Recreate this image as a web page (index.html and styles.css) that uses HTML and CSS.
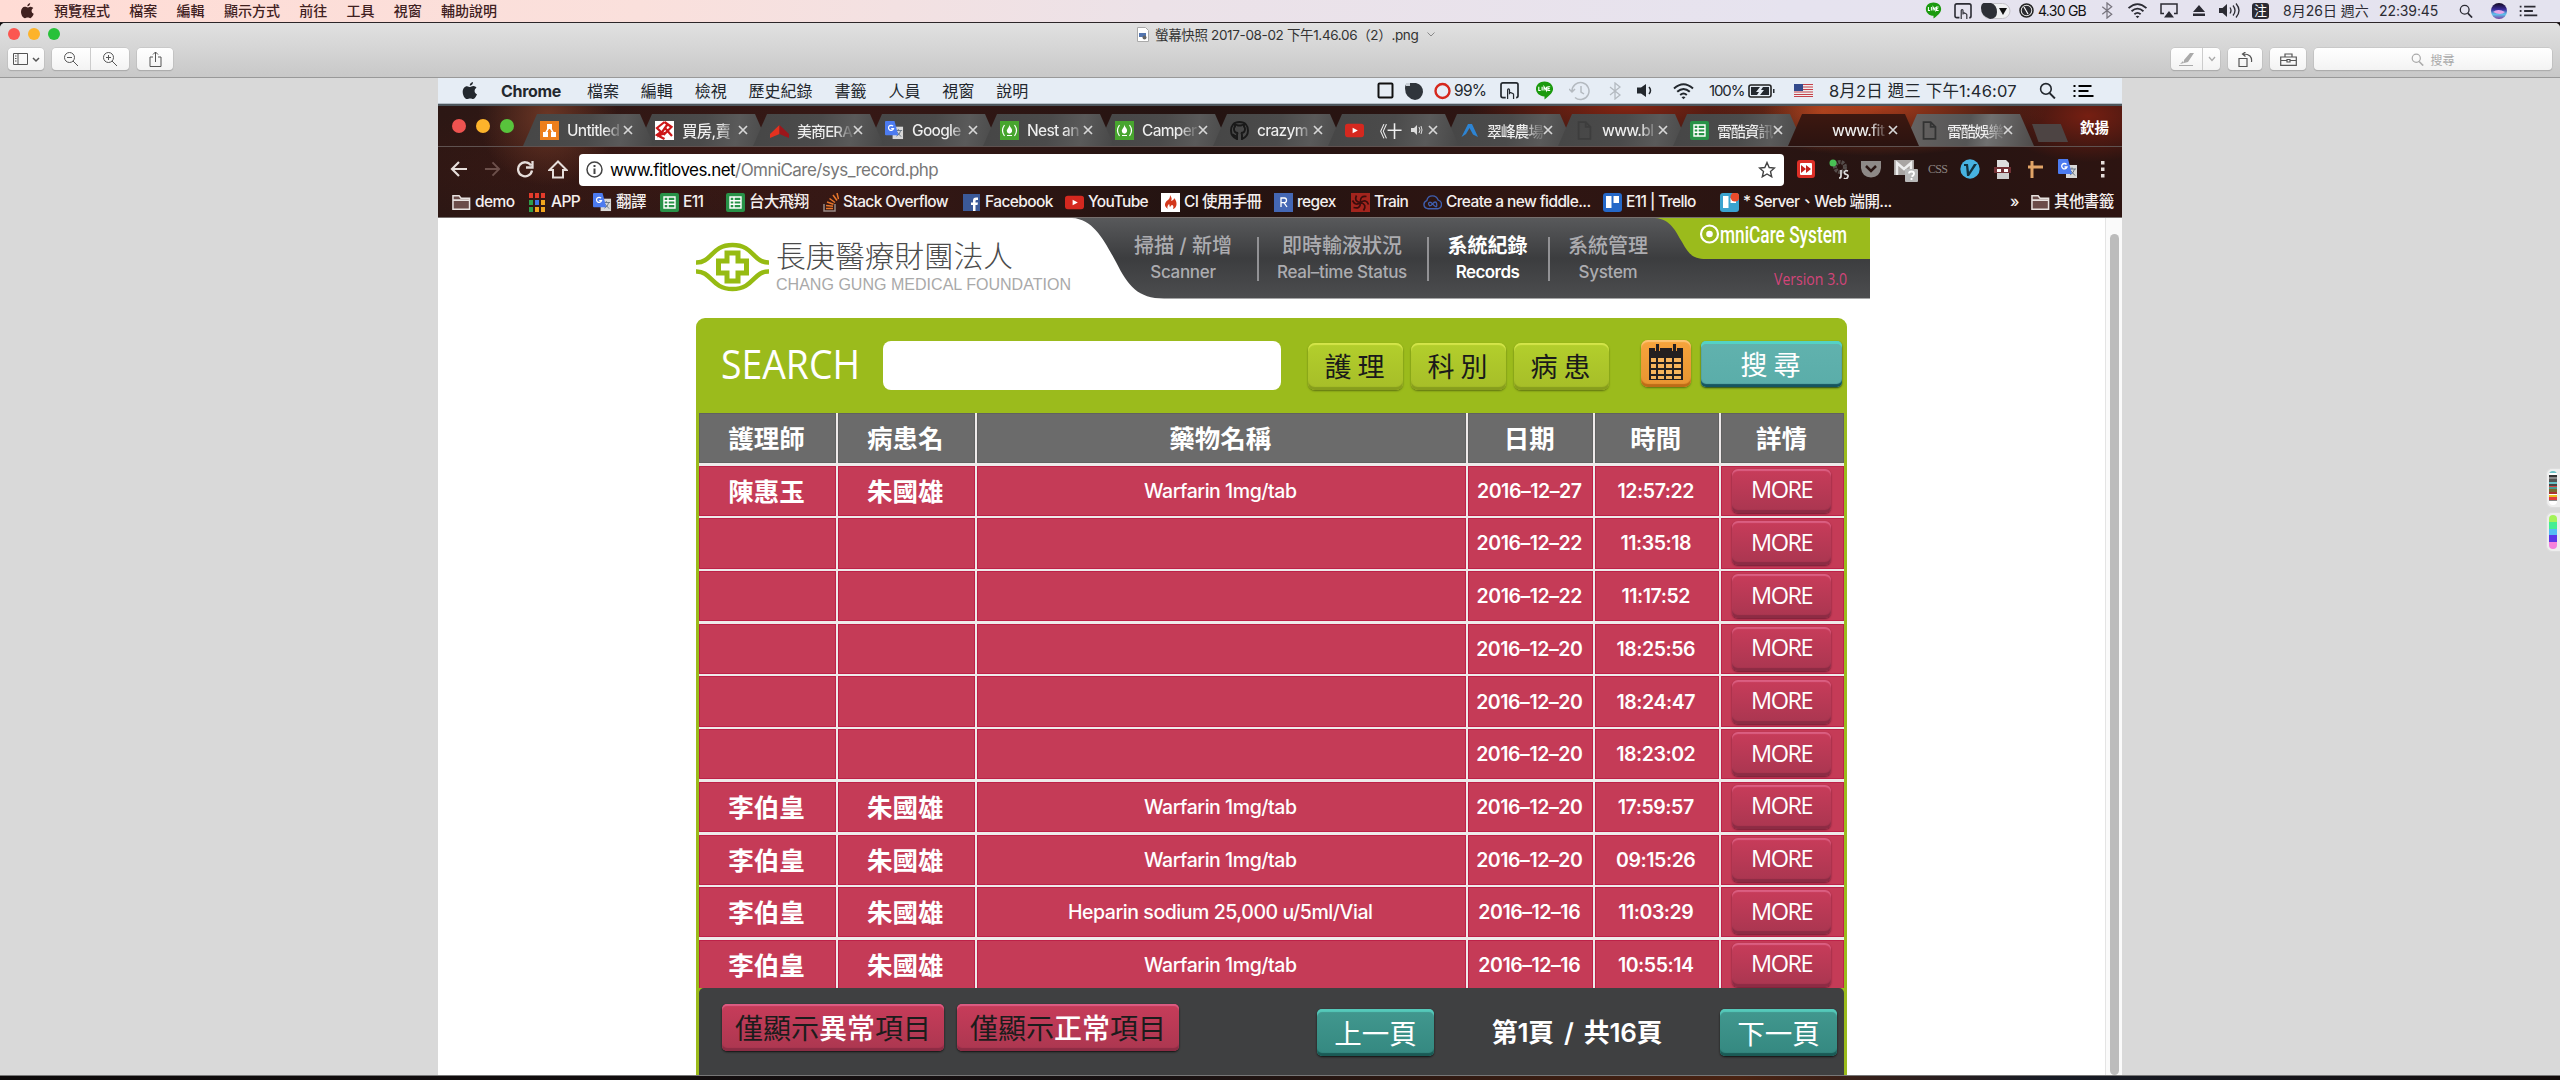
FILE: index.html
```html
<!DOCTYPE html>
<html lang="zh-Hant">
<head>
<meta charset="utf-8">
<title>螢幕快照 2017-08-02 下午1.46.06（2）.png</title>
<link rel="stylesheet" href="styles.css">
</head>
<body>
<svg class="defs" aria-hidden="true">
  <symbol id="apple" viewBox="0 0 16 18"><path d="M11 0c.2 1.6-1.200 3.600-3.200 3.700C7.500 2 9.200.300 11 0zM8.200 5c.7 0 1.800-1 3.300-.900 1.200.1 2.300.6 3 1.600-2.800 1.800-2.300 5.400.5 6.500-.7 1.900-2.200 4.800-3.800 4.900-1.100 0-1.600-.7-3-.7s-1.900.7-3 .7C3 17.200.700 13.500.700 9.900c0-3.400 2-5.700 4.300-5.700 1.300 0 2.300.8 3.200.8z"/></symbol>
  <symbol id="glass" viewBox="0 0 16 16"><circle cx="6.500" cy="6.500" r="5" fill="none" stroke="currentColor" stroke-width="1.500"/><path d="M10 10.500l5 5" stroke="currentColor" stroke-width="1.900"/></symbol>
  <symbol id="list" viewBox="0 0 20 16"><path d="M0 3h2M5 3h13M0 8h2M5 8h10M0 13h2M5 13h15" stroke="currentColor" stroke-width="2.200"/></symbol>
  <symbol id="wifi" viewBox="0 0 22 18"><path d="M1.500 6.500q9.500-8.500 19 0M4.700 9.800q6.300-5.600 12.600 0M7.700 12.900q3.300-2.800 6.600 0" fill="none" stroke="currentColor" stroke-width="2"/><path d="M9 15.200q2-1.500 4 0l-2 2z"/></symbol>
  <symbol id="line" viewBox="0 0 19 20"><path d="M9.500.500c5 0 9 3.300 9 7.700 0 5-5.500 8.300-9 11.300v-3.200C4.500 16.300.500 12.600.500 8.200S4.500.500 9.500.500z" fill="#1b9a0e"/><path d="M3.500 6v4h2M7 6v4M9 10V6l2.500 4V6M15.500 6H13v4h2.500M13 8h2" fill="none" stroke="#fff" stroke-width="1.200"/></symbol>
  <symbol id="hand" viewBox="0 0 20 18"><path d="M6 16.500H3q-2 0-2-2V3q0-2 2-2h14q2 0 2 2v11.500q0 2-2 2" fill="none" stroke="currentColor" stroke-width="1.800"/><path d="M8 18V8.500q0-1.200 1-1.200t1 1.200V13M10 11.500q1.500-.8 2.500.3 1.500 0 1.800 1.200V18" fill="none" stroke="currentColor" stroke-width="1.300"/></symbol>
  <symbol id="bt" viewBox="0 0 12 18"><path d="M1 5l10 8-5 4V1l5 4-10 8" fill="none" stroke="currentColor" stroke-width="1.300"/></symbol>
  <symbol id="sheet" viewBox="0 0 19 19"><rect width="19" height="19" rx="2" fill="#279247"/><path d="M4 4h11v11H4zM4 7.700h11M4 11.300h11M8 4v11" fill="none" stroke="#fff" stroke-width="1.400"/></symbol>
  <symbol id="trans" viewBox="0 0 20 20"><rect x="8" y="6" width="11" height="13" fill="#d8d8d8"/><path d="M11 10h7M14 8.500V10M12 16q4-2 4.500-6M12.500 11.500l4.500 5" stroke="#697785" fill="none"/><path d="M1 0h9l4 15H1q-1 0-1-1V1q0-1 1-1z" fill="#4c7bf0"/><path d="M8.500 5.500A2.700 2.700 0 1 0 9 8H6.500" fill="none" stroke="#fff" stroke-width="1.300"/></symbol>
  <symbol id="yt" viewBox="0 0 20 19"><rect y="2.500" width="20" height="14" rx="3" fill="#d5281f"/><path d="M8 6.500l5.500 3-5.500 3z" fill="#fff"/></symbol>
  <symbol id="fcc" viewBox="0 0 19 19"><rect width="19" height="19" fill="#47a52e"/><path d="M4.500 4q-4 5.500 0 11M14.500 4q4 5.500 0 11M7 14.500h5" fill="none" stroke="#fff" stroke-width="1.200"/><path d="M9.300 3.500c.5 3 3.400 4 2.700 7q-.6 2-2.500 2.300Q7 12.500 6.800 10C6.700 8 9.300 7 9.300 3.500z" fill="#fff"/></symbol>
  <symbol id="folder" viewBox="0 0 20 17"><path d="M1 15.500V1.500h6.500l2 2.500H18.500v11.500zM1 6h17.500" fill="#6b4c49" stroke="#e8e2e0" stroke-width="1.600"/></symbol>
  <symbol id="doc" viewBox="0 0 12 16"><path d="M1 1h6l4 4v10H1zM7 1v4h4" fill="none" stroke="currentColor" stroke-width="1.500"/></symbol>
  <symbol id="x" viewBox="0 0 10 10"><path d="M1 1l8 8M9 1l-8 8" stroke="#d6d6d6" stroke-width="1.700"/></symbol>
</svg>

<header class="menubar">
  <svg class="m-apple"><use href="#apple"/></svg>
  <nav class="menus"><span>預覽程式</span><span>檔案</span><span>編輯</span><span>顯示方式</span><span>前往</span><span>工具</span><span>視窗</span><span>輔助說明</span></nav>
  <div class="extras">
    <svg width="17" height="17"><use href="#line"/></svg>
    <svg width="18" height="16"><use href="#hand"/></svg>
    <svg width="30" height="16" viewBox="0 0 30 16"><rect x="1" y=".5" width="28" height="15" rx="7.500" fill="#f0f0f2" stroke="#c4c2c8"/><path d="M2.500 0H10Q16 2 16 9T9 16Q0 13 0 5 0 1 2.500 0z" fill="#2d2f36"/><path d="M18 5h8l-4 7z" fill="#111"/></svg>
    <svg width="15" height="15" viewBox="0 0 15 15"><circle cx="7.500" cy="7.500" r="6.500" fill="#eee" stroke="#222" stroke-width="1.500"/><circle cx="7.500" cy="7.500" r="4.800" fill="#2b2b30"/><path d="M5 4l4 7" stroke="#fff" stroke-width="1.200"/></svg>
    <span class="gb">4.30 GB</span>
    <svg class="faint" width="12" height="17"><use href="#bt"/></svg>
    <svg width="21" height="17"><use href="#wifi"/></svg>
    <svg width="18" height="15" viewBox="0 0 18 15"><path d="M4 10.500H1V1h16v9.500h-3" fill="none" stroke="#2b2b33" stroke-width="1.500"/><path d="M9 8l5 6.500H4z"/></svg>
    <svg width="12" height="11" viewBox="0 0 12 11"><path d="M6 0l6 7H0zM0 8.500h12V11H0z"/></svg>
    <svg width="21" height="15" viewBox="0 0 21 15"><path d="M0 5h3.500L8 1v13L3.500 10H0z"/><path d="M11 4.500q2 3 0 6M14 2.500q4 5 0 10M17 .5q6 7 0 14" fill="none" stroke="currentColor" stroke-width="1.300"/></svg>
    <span class="ime">注</span>
    <span>8月26日 週六</span>
    <span class="clk">22:39:45</span>
    <svg width="14" height="14"><use href="#glass"/></svg>
    <svg width="16" height="16" viewBox="0 0 16 16"><defs><linearGradient id="siri" x2="0" y2="1"><stop stop-color="#12091f"/><stop offset=".4" stop-color="#3a2b9a"/><stop offset=".7" stop-color="#5fc6ef"/><stop offset="1" stop-color="#7a3c9c"/></linearGradient></defs><circle cx="8" cy="8" r="8" fill="url(#siri)"/><path d="M2 9q5-4 12 0-4 4-12 0z" fill="#e7a7e8"/></svg>
    <svg width="19" height="14"><use href="#list"/></svg>
  </div>
</header>

<main class="window">
  <div class="titlebar">
    <div class="title-row">
      <div class="lights"><i class="red"></i><i class="yellow"></i><i class="green"></i></div>
      <div class="title">
        <svg width="12" height="15" viewBox="0 0 12 15"><path d="M.5.500h8l3 3v11H.500z" fill="#fff" stroke="#aaa"/><rect x="2" y="6" width="7" height="4" fill="#5476b0"/><circle cx="7.500" cy="10.500" r="2" fill="#666"/></svg>
        <span>螢幕快照 2017-08-02 下午1.46.06（2）.png</span>
        <svg width="8" height="5" viewBox="0 0 8 5"><path d="M.5.500L4 4 7.500.500" fill="none" stroke="#888"/></svg>
      </div>
    </div>
    <div class="tools">
      <div class="btn b-side"><svg width="27" height="14" viewBox="0 0 27 14"><path d="M.5 1.500h14v11H.500zM5 1.500v11M2 4h1.500M2 6.500h1.500M2 9h1.500" fill="none" stroke="#555"/><path d="M20 6l3 3 3-3" fill="none" stroke="#555" stroke-width="1.500"/></svg></div>
      <div class="btn b-zoom">
        <span><svg width="16" height="16" viewBox="0 0 16 16"><circle cx="6.500" cy="6.500" r="5" fill="none" stroke="#555"/><path d="M4 6.500h5M10 10l5 5" stroke="#555"/></svg></span>
        <span><svg width="16" height="16" viewBox="0 0 16 16"><circle cx="6.500" cy="6.500" r="5" fill="none" stroke="#555"/><path d="M4 6.500h5M6.500 4v5M10 10l5 5" stroke="#555"/></svg></span>
      </div>
      <div class="btn b-share"><svg width="13" height="16" viewBox="0 0 13 16"><path d="M4 6H1v9.500h11V6H9M6.500 11V1M4 3.500L6.500 1 9 3.500" fill="none" stroke="#555"/></svg></div>
      <div class="btn b-pen">
        <span><svg width="16" height="13" viewBox="0 0 16 13"><path d="M5 7L11 0h4L9 9l-4 1zM1 11l3-3 1 2zM0 12h14v1H0z" fill="#aaa"/></svg></span>
        <span><svg width="8" height="6" viewBox="0 0 8 6"><path d="M1 1l3 3.500L7 1" fill="none" stroke="#aaa" stroke-width="1.300"/></svg></span>
      </div>
      <div class="btn b-rot"><svg width="15" height="15" viewBox="0 0 15 15"><path d="M1 6.500h8v8H1zM13.500 10q1-8-8-8M7.500 0l-3 2 3 2.500" fill="none" stroke="#555" stroke-width="1.200"/></svg></div>
      <div class="btn b-kit"><svg width="17" height="13" viewBox="0 0 17 13"><path d="M.7 4h15.600v8.300H.700zM5 4V1h7v3M.7 7.500H7M10 7.500h6.300M7 6.500h3v2.500H7z" fill="none" stroke="#555" stroke-width="1.200"/></svg></div>
      <div class="btn b-search"><svg width="13" height="13"><use href="#glass"/></svg>搜尋</div>
    </div>
  </div>

  <div class="canvas">
    <section class="shot">
      <div class="bar2">
        <svg class="b-apple" width="16" height="18"><use href="#apple"/></svg>
        <nav><b>Chrome</b><span>檔案</span><span>編輯</span><span>檢視</span><span>歷史紀錄</span><span>書籤</span><span>人員</span><span>視窗</span><span>說明</span></nav>
        <div class="extras2">
          <svg width="17" height="17" viewBox="0 0 17 17"><rect x="1.500" y="1.500" width="14" height="14" rx="1" fill="none" stroke="#111" stroke-width="2"/></svg>
          <svg width="18" height="18" viewBox="0 0 18 18"><path d="M3 1H11Q18 3 18 10 17 17 10 18 0 16 0 6 0 2 3 1z" fill="#2f353b"/><path d="M1 1h4v3H1z" fill="#c9d0d7"/></svg>
          <svg width="17" height="18" viewBox="0 0 17 18"><circle cx="8.500" cy="9" r="7" fill="none" stroke="#d6281c" stroke-width="2.400"/></svg>
          <span>99%</span>
          <svg width="21" height="17"><use href="#hand"/></svg>
          <svg width="19" height="19"><use href="#line"/></svg>
          <svg class="pale" width="22" height="20" viewBox="0 0 22 20"><path d="M3 10a8.500 8.500 0 1 1 3 6.500M0 8l3 3 3-3M12 5v6l3 2" fill="none" stroke="currentColor" stroke-width="1.500"/></svg>
          <svg class="pale" width="12" height="18"><use href="#bt"/></svg>
          <svg width="16" height="15" viewBox="0 0 16 15"><path d="M0 4.500h4L9 1v13L4 10.500H0z"/><path d="M12 4q3 3.500 0 7" fill="none" stroke="currentColor" stroke-width="1.500"/></svg>
          <svg width="23" height="18"><use href="#wifi"/></svg>
          <span class="pct">100%</span>
          <svg width="27" height="14" viewBox="0 0 27 14"><rect x="1" y="1" width="22" height="12" rx="2" fill="none" stroke="#222" stroke-width="1.600"/><path d="M3 3h9l-4 5h3l-2 3H3zM21 11h-9l4-5h-3l2-3h6zM25 5h1.500v4H25z"/></svg>
          <svg width="19" height="13" viewBox="0 0 19 13"><path fill="#eee" d="M0 0h19v13H0z"/><path d="M0 .5h19M0 3h19M0 5.500h19M0 8h19M0 10.500h19M0 12.500h19" stroke="#c4404a" stroke-width="1.100"/><path fill="#334a8c" d="M0 0h9v7H0z"/></svg>
          <span class="dt">8月2日 週三 下午1:46:07</span>
          <svg width="17" height="17"><use href="#glass"/></svg>
          <svg class="ink" width="21" height="16"><use href="#list"/></svg>
        </div>
      </div>

      <div class="chrome">
        <div class="strip">
          <div class="lights big"><i class="red"></i><i class="yellow"></i><i class="green"></i></div>
          <div class="tabs">
            <div class="tab"><svg class="fav" viewBox="0 0 19 19"><rect width="19" height="19" fill="#ed7f1c"/><path d="M9.500 5.500L5 13M9.500 5.500L14 13" stroke="#fff" stroke-width="1.500"/><path fill="#fff" d="M7 3h5v5H7zM3 11h5v5H3zM11 11h5v5h-5z"/></svg><span>Untitled</span><svg class="x"><use href="#x"/></svg></div>
            <div class="tab"><svg class="fav" viewBox="0 0 19 19"><path fill="#fff" d="M0 0h19v19H0z"/><path d="M9.500 1L2 7l4 4-4 3 7.500 4M9.500 1l7 5-8 8M10 7l7 8M12 4L5 14l5-2" fill="none" stroke="#cc1719" stroke-width="2.200"/></svg><span>買房,賣</span><svg class="x"><use href="#x"/></svg></div>
            <div class="tab"><svg class="fav" viewBox="0 0 19 19"><path d="M9.500 4v9L0 17v-4z" fill="#e5311f"/><path d="M9.500 4l9.500 9v4l-9.500-4z" fill="#9d161b"/></svg><span class="tight">美商ERA</span><svg class="x"><use href="#x"/></svg></div>
            <div class="tab"><svg class="fav"><use href="#trans"/></svg><span>Google</span><svg class="x"><use href="#x"/></svg></div>
            <div class="tab"><svg class="fav"><use href="#fcc"/></svg><span>Nest an</span><svg class="x"><use href="#x"/></svg></div>
            <div class="tab"><svg class="fav"><use href="#fcc"/></svg><span>Camper</span><svg class="x"><use href="#x"/></svg></div>
            <div class="tab"><svg class="fav" viewBox="0 0 19 19"><path d="M9.500 1C3.500 1 1 5 1 9.500c0 4 2.200 7 6 8.500v-3q-3 .5-4-2M9.500 1C15.500 1 18 5 18 9.500c0 4-2.200 7-6 8.500v-4q0-1.500-1-2 4 0 4-4 0-1.500-1-2.500V3L11 4.500H8L5 3v2.500Q4 6.500 4 8q0 4 4 4-1 .5-1 2" fill="none" stroke="#191919" stroke-width="1.900"/></svg><span>crazym</span><svg class="x"><use href="#x"/></svg></div>
            <div class="tab audio"><svg class="fav"><use href="#yt"/></svg><span>《十</span><svg class="snd" viewBox="0 0 12 12"><path d="M0 4h3l3-3v10L3 8H0z" fill="#ddd"/><path d="M8 3q2 3 0 6M10 2q2 4 0 8" fill="none" stroke="#ddd"/></svg><svg class="x"><use href="#x"/></svg></div>
            <div class="tab"><svg class="fav" viewBox="0 0 19 19"><path d="M8 3h4l6 13-5-2.500L9.500 7 6 13l-4.500 3z" fill="#2d84d3"/></svg><span class="four">翠峰農場</span><svg class="x"><use href="#x"/></svg></div>
            <div class="tab"><svg class="fav dim"><use href="#doc"/></svg><span>www.bl</span><svg class="x"><use href="#x"/></svg></div>
            <div class="tab"><svg class="fav"><use href="#sheet"/></svg><span class="four">雷酷資訊</span><svg class="x"><use href="#x"/></svg></div>
            <div class="tab active"><i class="fav"></i><span>www.fit</span><svg class="x"><use href="#x"/></svg></div>
            <div class="tab"><svg class="fav blank"><use href="#doc"/></svg><span class="four">雷酷娛樂</span><svg class="x"><use href="#x"/></svg></div>
          </div>
          <div class="newtab"></div>
          <div class="user">欽揚</div>
        </div>

        <div class="toolbar">
          <svg width="18" height="18" viewBox="0 0 18 18"><path d="M17 9H2M9 2L2 9l7 7" fill="none" stroke="#e6dedb" stroke-width="2.200"/></svg>
          <svg width="17" height="18" viewBox="0 0 18 18"><path d="M1 9h15M9 2l7 7-7 7" fill="none" stroke="#6c504b" stroke-width="2"/></svg>
          <svg width="18" height="18" viewBox="0 0 18 18"><path d="M15 5.500A7 7 0 1 0 16 10.500M16.500 1v6.500H10" fill="none" stroke="#e6dedb" stroke-width="2.300"/></svg>
          <svg width="20" height="19" viewBox="0 0 20 19"><path d="M10 1.500L1.500 10H5v7.500h10V10h3.500z" fill="none" stroke="#e6dedb" stroke-width="2"/></svg>
          <div class="address">
            <svg width="17" height="17" viewBox="0 0 17 17"><circle cx="8.500" cy="8.500" r="7.500" fill="none" stroke="#444" stroke-width="1.500"/><path d="M8.500 7.500V13M8.500 4v2" stroke="#444" stroke-width="2"/></svg>
            <p>www.fitloves.net<em>/OmniCare/sys_record.php</em></p>
            <svg width="18" height="17" viewBox="0 0 18 17"><path d="M9 1.500l2.200 5 5.300.5-4 3.500 1.200 5.300L9 13l-4.700 2.800 1.200-5.300-4-3.500 5.300-.5z" fill="none" stroke="#444" stroke-width="1.400"/></svg>
          </div>
          <div class="exts">
            <svg width="18" height="18" viewBox="0 0 18 18"><rect width="18" height="18" rx="3" fill="#dc2f27"/><rect x="3" y="3" width="12" height="12" rx="1" fill="#fff"/><path d="M4 5l5 4-5 4zM9 5l5 4-5 4z" fill="#c5211d"/></svg>
            <svg width="20" height="20" viewBox="0 0 20 20"><circle cx="11" cy="8" r="5" fill="none" stroke="#544c4a" stroke-width="4" stroke-dasharray="2.500 1"/><circle cx="4" cy="4" r="3.500" fill="#49c055"/><path d="M12 11v6q0 2-2 2M19 12q-3-1-3.500 1t2 2.500 1 3-3.500.5" fill="none" stroke="#ddd" stroke-width="1.700"/></svg>
            <svg width="20" height="18" viewBox="0 0 20 18"><path d="M0 1h20v7q-1 9-10 9.500Q1 17 0 8z" fill="#8e8987"/><path d="M5 6l5 5 5-5" fill="none" stroke="#2a1512" stroke-width="2.500"/></svg>
            <svg class="gm" width="24" height="22" viewBox="0 0 24 22"><path fill="#a9a5a3" d="M0 0h20v15H0z"/><path d="M3 15V3l7 6 7-6v12" fill="none" stroke="#eee" stroke-width="2.500"/><rect x="11" y="9" width="13" height="13" rx="1" fill="#b9b9b9"/><path d="M15 13.500q0-2 2.500-2t2.500 2-2.500 3M17.500 18v2" fill="none" stroke="#fff" stroke-width="1.800"/></svg>
            <span class="css">CSS</span>
            <svg width="20" height="20" viewBox="0 0 20 20"><circle cx="10" cy="10" r="9.700" fill="#47b3e1"/><path d="M4 5h4l1 8 5-8h3L9 17H7L6 7H4z" fill="#12323f"/></svg>
            <svg width="17" height="19" viewBox="0 0 17 19"><path d="M3 0h9l3 3v4H3z" fill="#ddd"/><path d="M0 7h17v6H0z" fill="#713034"/><path d="M3 13h12v6H3z" fill="#ccc"/><path d="M3 9h4v3H3zM10 9h4v3h-4z" fill="#fff"/></svg>
            <svg width="15" height="17" viewBox="0 0 15 17"><path d="M4 0v17M0 6h15" stroke="#e2a467" stroke-width="3"/></svg>
            <svg width="20" height="20"><use href="#trans"/></svg>
            <svg width="4" height="18" viewBox="0 0 4 18"><path fill="#e6dedb" d="M0 1h3.500v3.500H0zM0 7.500h3.500V11H0zM0 14h3.500v3.500H0z"/></svg>
          </div>
        </div>

        <div class="bookmarks">
          <a><svg><use href="#folder"/></svg>demo</a>
          <a class="apps"><svg viewBox="0 0 16 19"><path fill="#e33b2b" d="M0 0h4v5H0zM6 0h4v5H6zM12 0h4v5h-4z"/><path fill="#2e9e4b" d="M0 7h4v5H0z"/><path fill="#3d74e6" d="M6 7h4v5H6z"/><path fill="#f2a51f" d="M12 7h4v5h-4zM6 14h4v5H6zM12 14h4v5h-4z"/><path fill="#2e9e4b" d="M0 14h4v5H0z"/></svg>APP</a>
          <a><svg><use href="#trans"/></svg>翻譯</a>
          <a><svg><use href="#sheet"/></svg>E11</a>
          <a><svg><use href="#sheet"/></svg>台大飛翔</a>
          <a class="so"><svg viewBox="0 0 16 19"><path d="M1 11v7h11v-7" fill="none" stroke="#9a8b86" stroke-width="1.500"/><path d="M3 15.500h7M3 12.500l7 .8M4 9l6.500 2.200M6.500 5.500l5.500 4M10 2l4 5.500M14 0l1.500 6" stroke="#e8762b" stroke-width="1.500"/></svg>Stack Overflow</a>
          <a class="fb"><svg viewBox="0 0 17 17"><path fill="#3b5998" d="M0 0h17v17H0z"/><path d="M10 17v-6H8V8.500h2V6.500Q10 3.500 13 3.500h2V6h-1.500q-1 0-1 1v1.500H15L14.500 11h-2v6z" fill="#fff"/></svg>Facebook</a>
          <a><svg><use href="#yt"/></svg>YouTube</a>
          <a><svg viewBox="0 0 19 19"><path fill="#fff" d="M0 0h19v19H0z"/><path d="M9 2c2 3 2 4 1 6 3-1 3-2 3-3 4 4 3 10-1 11 1-3 0-4-1-4s-1 1-2 2c-1-1 0-2-1-3-2 2-2 4-1 5-5-3-3-7 0-9 2-2 2-3 2-5z" fill="#d3381c"/></svg>CI 使用手冊</a>
          <a><svg viewBox="0 0 19 19"><path fill="#4467b4" d="M0 0h19v19H0z"/><path d="M7 14V5h3.500q2 0 2 2.300t-2 2.300H7M10 9.600l3 4.400" fill="none" stroke="#fff" stroke-width="1.300"/></svg>regex</a>
          <a><svg viewBox="0 0 19 19"><path fill="#a3241d" d="M0 0h19v19H0z"/><path d="M9.500 9.500q-7-1-4-7M9.500 9.500q-1-7 6-6M9.500 9.500q6-4 8 2M9.500 9.500q7 2 3 8M9.500 9.500q0 7-7 5M9.500 9.500q-5 4-8-2" fill="none" stroke="#3a0d0c" stroke-width="1.700"/></svg>Train</a>
          <a><svg viewBox="0 0 20 19"><path d="M5 16q-4-1-4-4.500 0-3 3-4 1-5 6-5 4.500 0 6 4.500 3.500 1 3.500 4.500T16 16z" fill="none" stroke="#3f5eae" stroke-width="1.500"/><path d="M10 11q-2-2.500-3.500-1.500T7 13q1.500 0 3-2t3-2 1.500 3.500T10 11z" fill="none" stroke="#3f5eae" stroke-width="1.400"/></svg>Create a new fiddle...</a>
          <a><svg viewBox="0 0 19 19"><rect width="19" height="19" rx="3" fill="#2568c8"/><path fill="#fff" d="M3 3h5.500v12H3zM10.500 3H16v7h-5.500z"/></svg>E11 | Trello</a>
          <a><svg viewBox="0 0 19 19"><rect width="19" height="19" rx="3" fill="#3aa3cf"/><path fill="#fff" d="M3 3h5.500v12H3zM10.500 5H16v5h-5.500z"/><circle cx="15" cy="4" r="4.500" fill="#ea4b2b"/></svg>* Server、Web 端開...</a>
          <a class="more">»</a>
          <a><svg><use href="#folder"/></svg>其他書籤</a>
        </div>
      </div>

      <div class="view">
        <div class="page">
          <header class="site">
            <div class="brand">
              <svg width="73" height="50" viewBox="0 0 73 50"><g fill="none" stroke="#96bb12" stroke-width="4.500"><path d="M0 20.500C16 21 15 3 36.500 3S57 21 73 20.500M0 29.500C16 29 15 47 36.500 47S57 29 73 29.500"/><path d="M31 11h11v8h8.500v12H42v8H31v-8h-8.500V19H31z" stroke-width="5"/></g></svg>
              <div class="names">
                <svg width="240" height="30"><text class="zh" x="0" y="25" textLength="237" lengthAdjust="spacingAndGlyphs">長庚醫療財團法人</text></svg>
                <svg width="300" height="20"><text class="en" x="0" y="18" textLength="295" lengthAdjust="spacingAndGlyphs">CHANG GUNG MEDICAL FOUNDATION</text></svg>
              </div>
            </div>
            <div class="nav">
              <svg class="shape" width="798" height="81" viewBox="0 0 798 81"><defs><linearGradient id="ng" x2="0" y2="1"><stop stop-color="#58595b"/><stop offset=".5" stop-color="#3c3d3f"/><stop offset="1" stop-color="#4c4d4f"/></linearGradient></defs><path d="M0 0C22 1 33 24 44 44 56 68 66 80.500 92 80.500H798V0z" fill="url(#ng)"/><path d="M583 0C599 1 604 14 610 24 616 35 620 41 634 41H798V0z" fill="#9bbb1c"/><circle cx="637.500" cy="16" r="8.500" fill="none" stroke="#fff" stroke-width="2.200"/><circle cx="637.500" cy="16" r="3.300" fill="#fff"/><text class="omni" x="648" y="24.500" textLength="127" lengthAdjust="spacingAndGlyphs">mniCare System</text><text class="ver" x="702" y="67" textLength="73" lengthAdjust="spacingAndGlyphs">Version 3.0</text></svg>
              <div class="links">
                <a>掃描 / 新增<small>Scanner</small></a>
                <a>即時輸液狀況<small>Real–time Status</small></a>
                <a class="on">系統紀錄<small>Records</small></a>
                <a>系統管理<small>System</small></a>
              </div>
            </div>
          </header>

          <section class="panel">
            <div class="search">
              <svg width="142" height="60"><text class="cap" x="0" y="43" textLength="139" lengthAdjust="spacingAndGlyphs">SEARCH</text></svg>
              <div class="field"></div>
              <div class="lime">護 理</div><div class="lime">科 別</div><div class="lime">病 患</div>
              <div class="cal"><svg width="36" height="37" viewBox="0 0 36 37"><path d="M1 4h34v32H1z" fill="#231f20"/><path d="M3 14h5v4H3zM10 14h6v4h-6zM18 14h6v4h-6zM26 14h7v4h-7zM3 20h5v4H3zM10 20h6v4h-6zM18 20h6v4h-6zM26 20h7v4h-7zM3 26h5v4H3zM10 26h6v4h-6zM18 26h6v4h-6zM26 26h7v4h-7zM3 32h5v3H3zM10 32h6v3h-6zM18 32h6v3h-6zM26 32h7v3h-7z" fill="#f6b45c"/><path d="M9.500 0v7M26.500 0v7" stroke="#f29a38" stroke-width="5"/><path d="M9.500 0v7M26.500 0v7" stroke="#231f20" stroke-width="3"/></svg></div>
              <div class="go">搜 尋</div>
            </div>
            <div class="rows">
              <div class="row head"><div>護理師</div><div>病患名</div><div>藥物名稱</div><div>日期</div><div>時間</div><div>詳情</div></div>
              <div class="row"><div>陳惠玉</div><div>朱國雄</div><div>Warfarin 1mg/tab</div><div>2016–12–27</div><div>12:57:22</div><div><button>MORE</button></div></div>
              <div class="row"><div></div><div></div><div></div><div>2016–12–22</div><div>11:35:18</div><div><button>MORE</button></div></div>
              <div class="row"><div></div><div></div><div></div><div>2016–12–22</div><div>11:17:52</div><div><button>MORE</button></div></div>
              <div class="row"><div></div><div></div><div></div><div>2016–12–20</div><div>18:25:56</div><div><button>MORE</button></div></div>
              <div class="row"><div></div><div></div><div></div><div>2016–12–20</div><div>18:24:47</div><div><button>MORE</button></div></div>
              <div class="row"><div></div><div></div><div></div><div>2016–12–20</div><div>18:23:02</div><div><button>MORE</button></div></div>
              <div class="row"><div>李伯皇</div><div>朱國雄</div><div>Warfarin 1mg/tab</div><div>2016–12–20</div><div>17:59:57</div><div><button>MORE</button></div></div>
              <div class="row"><div>李伯皇</div><div>朱國雄</div><div>Warfarin 1mg/tab</div><div>2016–12–20</div><div>09:15:26</div><div><button>MORE</button></div></div>
              <div class="row"><div>李伯皇</div><div>朱國雄</div><div>Heparin sodium 25,000 u/5ml/Vial</div><div>2016–12–16</div><div>11:03:29</div><div><button>MORE</button></div></div>
              <div class="row"><div>李伯皇</div><div>朱國雄</div><div>Warfarin 1mg/tab</div><div>2016–12–16</div><div>10:55:14</div><div><button>MORE</button></div></div>
            </div>
            <footer class="foot">
              <div class="only">僅顯示<b>異常</b>項目</div>
              <div class="only">僅顯示<b>正常</b>項目</div>
              <div class="pg">上一頁</div>
              <div class="count">第1頁 / 共16頁</div>
              <div class="pg">下一頁</div>
            </footer>
          </section>
        </div>
        <div class="scroll"><i></i></div>
      </div>
    </section>
    <aside class="chips">
      <div><i class="c1"></i></div>
      <div><i class="c2"></i></div>
    </aside>
  </div>
</main>
</body>
</html>
```
FILE: styles.css
```css
* { box-sizing: border-box; }
html, body { height: 1080px; overflow: hidden; }
body {
  margin: 0;
  display: flex;
  flex-direction: column;
  font-family: Inter, "Noto Sans CJK TC", sans-serif;
  color: #2b2b33;
  background: linear-gradient(90deg, #0d0a0a, #171112 45%, #4a2312 68%, #181c26 80%, #120c0b);
}
i, em { font-style: normal; }
svg { display: block; flex: none; fill: currentColor; }
.defs { position: absolute; width: 0; height: 0; }

/* system menu bar */
.menubar {
  height: 23px;
  flex: none;
  display: flex;
  align-items: center;
  padding: 0 23px 1px 20px;
  white-space: nowrap;
  font-size: 14px;
  line-height: 22px;
  background: linear-gradient(90deg, #ffdcd5, #fae0dc 25%, #ece2e8 45%, #e6e3ef 70%, #e4e3ef);
  border-bottom: 1px solid #2c2528;
}
.m-apple { width: 15px; height: 16px; color: #40211f; margin-right: 19px; }
.menus { display: flex; gap: 19.3px; color: #40211f; font-weight: 500; }
.extras {
  margin-left: auto;
  display: grid;
  align-items: center;
  grid-template-columns: 29px 27px 38px 19px 63px 26px 33px 33px 26px 33px 31px 96px 80px 32px 28px 18px;
}
.faint { color: #77747d; }
.gb { color: #111; letter-spacing: -.75px; }
.ime { width: 17px; height: 16px; background: #2b2b33; color: #fff; border-radius: 3px; font-size: 13px; line-height: 15px; text-align: center; }
.clk { letter-spacing: -.1px; }

/* preview window */
.window { height: 1053px; flex: none; display: flex; flex-direction: column; border-radius: 5px 5px 0 0; overflow: hidden; background: #d9d9d9; border-bottom: 1px solid #777; }
.titlebar { height: 55px; flex: none; background: linear-gradient(#e1e1e1, #c8c8c8); border-bottom: 1px solid #999; }
.title-row { height: 25px; display: grid; grid-template-columns: 1129px 1fr; align-items: center; padding: 0 8px; }
.lights { display: flex; gap: 8px; margin-top: -3px; }
.lights i { width: 12px; height: 12px; border-radius: 50%; }
.red { background: #fb5650; } .yellow { background: #fdb32b; } .green { background: #28c139; }
.title { display: flex; align-items: center; gap: 6px; margin-top: -3px; font-size: 13.5px; color: #333; white-space: nowrap; }
.title span { width: 266px; letter-spacing: -.35px; }
.tools { display: flex; padding: 0 8px; }
.btn { height: 22px; display: flex; align-items: center; justify-content: center; background: linear-gradient(#fff, #f3f3f3); border-radius: 4px; box-shadow: 0 0 0 .5px #bbb, 0 1px 1px #999; }
.btn span { display: flex; justify-content: center; }
.b-side { width: 36px; margin-right: 8px; }
.b-zoom { width: 77px; margin-right: 8px; }
.b-zoom span { flex: 1; height: 22px; align-items: center; }
.b-zoom span + span, .b-pen span + span { border-left: 1px solid #ccc; height: 22px; align-items: center; }
.b-share { width: 36px; margin-right: auto; }
.b-pen { width: 49px; margin-right: 8px; }
.b-pen span:first-child { width: 31px; } .b-pen span + span { width: 18px; }
.b-rot { width: 34px; margin-right: 8px; }
.b-kit { width: 36px; margin-right: 8px; }
.b-search { width: 238px; gap: 6px; font-size: 12px; color: #aaa; }

.canvas { flex: 1; min-height: 0; display: flex; padding-left: 438px; }
.shot { width: 1684px; display: flex; flex-direction: column; background: #fff; }
.chips { margin: 390px 0 0 auto; display: flex; flex-direction: column; gap: 4px; }
.chips div { width: 14px; height: 40px; background: #eee; border-radius: 6px 0 0 6px; padding: 2px; border: 1px solid #ddd; border-right: 0; }
.chips i { display: block; width: 8px; height: 34px; border-radius: 4px; }
.c1 { background: linear-gradient(#6ac0c4 2px, #fff 2px 4px, #333 4px 6px, #888 6px 8px, #555 8px 11px, #6ac0c4 11px 13px, #444 13px 15px, #d44 15px 16px, #4a9a90 16px 18px, #7a6a30 18px 21px, #a33 21px 23px, #fff 23px 24px, #e8c020 24px 26px, #e04040 26px 29px, #888 29px 30px, #fff 30px); }
.c2 { background: linear-gradient(#a4f35a 20%, #45ee92 20% 40%, #55bdf4 40% 60%, #5d35e8 60% 80%, #f582dc 80%); }

/* menu bar inside the image */
.bar2 { height: 26px; flex: none; display: flex; align-items: center; padding-left: 24px; background: #e6edf5; white-space: nowrap; font-size: 16px; color: #23282e; line-height: 26px; border-bottom: 1px solid #b5bfc8; }
.b-apple { margin-right: 23px; }
.bar2 nav { display: flex; gap: 21.900px; }
.bar2 b { width: 64px; letter-spacing: -.3px; }
.extras2 { margin-left: auto; padding-right: 27px; display: grid; align-items: center; grid-template-columns: 28px 29px 20px 44.500px 36px 34px 40px 28.500px 35px 37px 39px 46px 35px 210px 34px 22px; }
.extras2 span { font-size: 15.500px; letter-spacing: -.7px; }
.extras2 .pct { font-size: 15px; letter-spacing: -1.100px; }
.extras2 .dt { font-size: 16.500px; letter-spacing: .15px; }
.pale { color: #b4bac0; }
.ink { color: #000; }

/* browser frame */
.chrome {
  height: 114px;
  flex: none;
  border-top: 2px solid #4d565c;
  border-bottom: 1px solid #77706e;
  background:
    radial-gradient(ellipse 60px 40px at 1385px 5px, #d8542388, transparent),
    radial-gradient(ellipse 170px 50px at 1440px 0, #a93c1b, transparent),
    radial-gradient(ellipse 160px 44px at 1190px 0, #852513, transparent),
    radial-gradient(ellipse 90px 46px at 1650px 10px, #761f12, transparent),
    radial-gradient(ellipse 70px 70px at 110px 10px, #6b3625, transparent),
    radial-gradient(ellipse 300px 60px at 170px 60px, #43191366, transparent),
    linear-gradient(90deg, #2c1714, #361815 25%, #231311 45%, #35171480 65%, #261412 88%, #2d1411),
    #2a1411;
}
.strip { height: 41px; display: flex; padding-left: 14px; border-bottom: 1px solid #5f5250; }
.lights.big { width: 71px; gap: 10px; margin: 13px 0 0; height: 14px; }
.big i { width: 14px; height: 14px; }
.big .red { background: #ee5350; } .big .green { background: #58c43c; }
.tabs { display: flex; align-self: flex-end; position: relative; height: 32px; isolation: isolate; }
.tab { width: 131px; flex: none; height: 32px; margin-right: -16px; padding-left: 17px; display: flex; align-items: center; clip-path: polygon(14px 0, 117px 0, 131px 100%, 0 100%); background: linear-gradient(100deg, #464646, #4b4b4b 50%, #5a5a5a 75%, #474747); color: #eee; font-size: 15.500px; font-weight: 500; position: relative; z-index: 5; }
.tab:nth-child(n+2) { z-index: 4; } .tab:nth-child(n+4) { z-index: 3; } .tab:nth-child(n+6) { z-index: 2; } .tab:nth-child(n+9) { z-index: 1; } .tab:last-child { z-index: 0; background: linear-gradient(100deg, #686463, #555 50%, #707070 65%, #4d4a49); }
.tab.active { z-index: 6; background: linear-gradient(#3d1810, #2b1310); }
.fav { width: 19px; height: 19px; margin-right: 8px; }
.dim { color: #3d3d3d; } .blank { color: #333; }
.tab span { width: 56px; flex: none; white-space: nowrap; letter-spacing: -.7px; color: transparent; background: linear-gradient(90deg, #eee 38px, #eeeeee38 52px); -webkit-background-clip: text; background-clip: text; }
.tab .tight { font-size: 15px; letter-spacing: -.9px; }
.tab .four { font-size: 15px; letter-spacing: -1.200px; }
.tab .x { width: 10px; height: 10px; }
.tab.audio span { width: 39px; } .audio .snd { width: 12px; height: 12px; margin-right: 5px; }
.newtab { width: 36px; height: 18px; margin: 18px 0 0 14px; background: #4d4443; clip-path: polygon(0 0, 80% 0, 100% 100%, 18% 100%); }
.user { margin: 11px 0 0 12px; color: #fff; font-size: 14.500px; font-weight: 700; line-height: 22px; white-space: nowrap; }
.toolbar { height: 44px; display: grid; align-items: center; grid-template-columns: 34px 32px 32px 31px 1205px 13px 1fr; padding-left: 12px; }
.address { grid-column: 5; height: 32px; margin-top: 1px; background: #fff; border-radius: 4px; display: flex; align-items: center; padding: 0 8px 0 7px; color: #000; font-size: 17px; }
.address p { margin: 0 auto 0 7px; letter-spacing: -.55px; white-space: nowrap; }
.address em { color: #777; }
.exts { grid-column: 7; display: grid; align-items: center; grid-template-columns: 32px 32px 33px 34px 32px 34px 34px 30px 43px 8px; }
.gm { margin-top: 4px; }
.css { font: 12px "Liberation Serif", serif; color: #8c8482; letter-spacing: -.7px; }
.bookmarks { height: 22px; display: grid; align-items: center; grid-template-columns: 77px 64px 67px 66px 97px 140px 102px 96px 113px 77px 72px 180px 117px 290px 21px 90px; padding-left: 14px; color: #f4efee; font-size: 15.500px; font-weight: 500; letter-spacing: -.6px; white-space: nowrap; line-height: 22px; }
.bookmarks a { display: flex; align-items: center; }
.bookmarks svg { width: 19px; height: 19px; margin-right: 4px; }
.bookmarks .apps svg { width: 16px; margin-right: 6px; }
.bookmarks .so svg { width: 16px; }
.bookmarks .fb svg { width: 17px; height: 17px; margin-right: 5px; }

/* web page */
.view { flex: 1; min-height: 0; display: flex; }
.page { flex: 1; padding-left: 258px; }
.scroll { width: 17px; border-left: 1px solid #e4e4e4; background: #fafafa; padding: 16px 0 0 4px; }
.scroll i { display: block; width: 9px; height: 100%; background: #bcbcbc; border-radius: 5px; }
.site { display: flex; height: 100px; }
.brand { width: 376px; display: flex; padding-top: 24px; }
.names { margin-left: 7px; }
.names svg { overflow: visible; }
.zh { font: 300 29.500px "Noto Sans CJK TC", sans-serif; fill: #4b4b4b; }
.en { font: 16.500px "Liberation Sans", sans-serif; fill: #a9a9a9; }
.nav { width: 798px; height: 81px; display: grid; }
.nav > * { grid-area: 1 / 1; }
.omni { font: 500 23px Roboto, sans-serif; fill: #fff; }
.ver { font: 16px "Open Sans", sans-serif; fill: #d4447a; }
.links { display: grid; grid-template-columns: 146px 170px 121px 120px; height: 42px; margin: 19px 0 0 39px; z-index: 1; color: #acacb0; font-size: 20px; font-weight: 500; text-align: center; }
.links a { border-left: 2px solid #929295; padding-right: 2px; display: flex; flex-direction: column; line-height: 18px; white-space: nowrap; align-items: center; }
.links a:first-child { border: 0; }
.links small { font-size: 17px; line-height: 18px; margin-top: 8px; letter-spacing: -.3px; }
.links .on { color: #fff; font-weight: 700; } .links .on small { font-weight: 600; letter-spacing: -.6px; }

.panel { width: 1151px; height: 757px; background: #9bbb1c; border-radius: 9px 9px 0 0; padding: 0 3px; }
.search { height: 95px; padding: 23px 0 0 22px; display: flex; align-items: flex-start; }
.search > svg { margin-top: -5px; }
.cap { font: 41px "Open Sans", sans-serif; fill: #fff; }
.field { width: 398px; height: 49px; margin: 0 27px 0 20px; background: #fff; border-radius: 8px; }
.lime { width: 95px; height: 47px; margin: 2px 8px 0 0; padding-right: 2px; border-radius: 7px; background: linear-gradient(#b3cf2c, #a6bd28); box-shadow: inset 0 2px 1px #d4e54a, inset 0 -3px 1px #879d1d, 0 1px 2px #5d7110; font-size: 27px; line-height: 45px; text-align: center; color: #1a1a1a; }
.cal { width: 50px; height: 47px; margin: -1px 10px 0 24px; border-radius: 7px; background: linear-gradient(#f7a43c, #e79431); box-shadow: inset 0 2px 1px #fdc574, inset 0 -3px 1px #bd6c17, 0 1px 2px #5d7110; display: grid; place-items: center; padding-bottom: 3px; }
.go { width: 141px; height: 46px; padding-right: 2px; border-radius: 5px; background: linear-gradient(#61b2ae, #5aada9); box-shadow: inset 0 3px 0 #54d2c5, inset 0 -3px 1px #16555f, 0 1px 2px #22431a; font-size: 27px; line-height: 45px; text-align: center; color: #fff; }
.lime, .go { white-space: nowrap; font-family: "Noto Sans CJK TC", sans-serif; }
.rows { height: 575px; overflow: hidden; background: #eeeaea; color: #fff; }
.row { display: grid; grid-template-columns: 137px 136.500px 489.500px 124.500px 124.500px 123px; gap: 2px; height: 52.700px; padding-bottom: 2.500px; font-size: 19.500px; font-weight: 600; letter-spacing: -.45px; }
.row > div { display: flex; align-items: center; justify-content: center; padding-right: 2px; background: #c53b57; box-shadow: inset 0 0 0 1px #bd2148; white-space: nowrap; }
.row > div:nth-child(3) { font-weight: 500; }
.row > div:nth-child(-n+2), .row.head > div:nth-child(n) { font: 700 25.500px "Noto Sans CJK TC", sans-serif; letter-spacing: 0; padding-bottom: 3px; }
.row.head > div { background: #6b6b6b; box-shadow: inset 0 0 0 1px #616161; }
.rows button { width: 99px; height: 44px; margin: 0; padding: 0 0 3px; border: 0; border-radius: 6px; background: linear-gradient(#c83c5a, #a93650); box-shadow: inset 0 2px 1px #db5f82, inset 0 -3px 1px #8c2c44, 0 1px 2px #701c33; color: #fff; font: 23.500px "Open Sans", sans-serif; letter-spacing: -1.500px; }
.foot { height: 87px; display: grid; grid-template-columns: 222px 222px 151px 117px 286px 117px; padding: 16px 7px 0 23px; background: #3f4041; border-radius: 5px 5px 0 0; white-space: nowrap; }
.only { height: 47px; border-radius: 5px; background: linear-gradient(#c83c5a, #ab3750); box-shadow: inset 0 2px 1px #dd5c83, inset 0 -3px 1px #8c2c44, 0 1px 2px #111; font: 28px/46px "Noto Sans CJK TC", sans-serif; text-align: center; color: #1c1c1c; }
.only + .only { margin-left: 13px; margin-right: -13px; }
.only b { color: #fff; font-weight: 500; }
.pg { grid-column: 4; margin-top: 5px; height: 47px; border-radius: 5px; background: linear-gradient(#42988f, #348880); box-shadow: inset 0 3px 1px #55c9ba, inset 0 -3px 1px #1a5a55, 0 1px 2px #111; color: #fff; font: 27.500px/46px "Noto Sans CJK TC", sans-serif; text-align: center; }
.pg:last-child { grid-column: 6; }
.count { grid-column: 5; margin-top: 9px; font-size: 26px; line-height: 40px; text-align: center; color: #fff; font-weight: 600; word-spacing: 4px; letter-spacing: -.3px; }
```
